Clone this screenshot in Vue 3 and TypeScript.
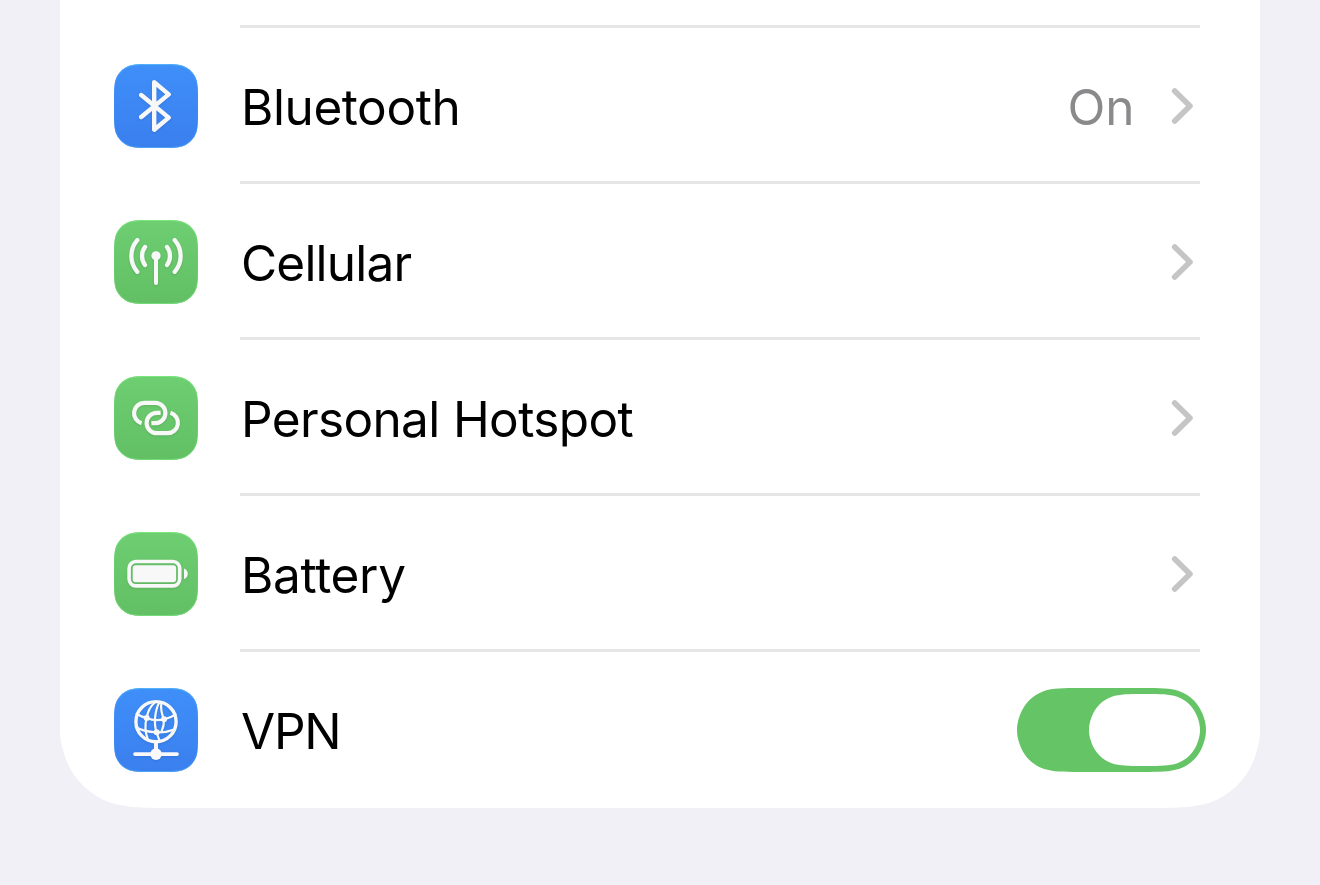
<script setup lang="ts">
import { ref } from 'vue'

type IconName = 'bluetooth' | 'cellular' | 'hotspot' | 'battery' | 'vpn'

interface SettingRow {
  icon: IconName
  label: string
  tint: 'blue' | 'green'
  value?: string
  toggle?: boolean
  tracking: number
}

const rows: SettingRow[] = [
  { icon: 'bluetooth', label: 'Bluetooth', tint: 'blue', value: 'On', tracking: -0.42 },
  { icon: 'cellular', label: 'Cellular', tint: 'green', tracking: -0.8 },
  { icon: 'hotspot', label: 'Personal Hotspot', tint: 'green', tracking: -0.63 },
  { icon: 'battery', label: 'Battery', tint: 'green', tracking: -0.33 },
  { icon: 'vpn', label: 'VPN', tint: 'blue', toggle: true, tracking: -1.2 },
]

const vpnOn = ref(true)

// Capsule whose round ends ease into the long sides.
function capsule(x: number, y: number, w: number, r: number): string {
  const L = (a: number, b: number) => `${(x + a * r).toFixed(2)} ${(y + b * r).toFixed(2)}`
  const R = (a: number, b: number) => `${(x + w - a * r).toFixed(2)} ${(y + b * r).toFixed(2)}`
  return [
    `M${L(1.5, 0)} L${R(1.5, 0)}`,
    `C${R(1.0885, 0)} ${R(0.8684, 0)} ${R(0.6315, 0.0749)}`,
    `C${R(0.3728, 0.1691)} ${R(0.1691, 0.3728)} ${R(0.0749, 0.6315)}`,
    `C${R(0.02, 0.78)} ${R(0, 0.88)} ${R(0, 1)}`,
    `C${R(0, 1.12)} ${R(0.02, 1.22)} ${R(0.0749, 1.3685)}`,
    `C${R(0.1691, 1.6272)} ${R(0.3728, 1.8309)} ${R(0.6315, 1.9251)}`,
    `C${R(0.8684, 2)} ${R(1.0885, 2)} ${R(1.5, 2)}`,
    `L${L(1.5, 2)}`,
    `C${L(1.0885, 2)} ${L(0.8684, 2)} ${L(0.6315, 1.9251)}`,
    `C${L(0.3728, 1.8309)} ${L(0.1691, 1.6272)} ${L(0.0749, 1.3685)}`,
    `C${L(0.02, 1.22)} ${L(0, 1.12)} ${L(0, 1)}`,
    `C${L(0, 0.88)} ${L(0.02, 0.78)} ${L(0.0749, 0.6315)}`,
    `C${L(0.1691, 0.3728)} ${L(0.3728, 0.1691)} ${L(0.6315, 0.0749)}`,
    `C${L(0.8684, 0)} ${L(1.0885, 0)} ${L(1.5, 0)}Z`,
  ].join(' ')
}

// Square with continuous corners.
function squircle(o: number, s: number, r: number): string {
  const f = (n: number) => n.toFixed(2)
  const p = [1.5287, 1.0885, 0.8684, 0.6315, 0.3728, 0.1691, 0.0749].map((n) => n * r)
  const [a, b, c, d, e, g, h] = p
  const e1 = o + s
  const q = (...n: number[]) => n.map(f).join(' ')
  return (
    `M${q(o + a, o)} L${q(e1 - a, o)}` +
    `C${q(e1 - b, o, e1 - c, o, e1 - d, o + h)}C${q(e1 - e, o + g, e1 - g, o + e, e1 - h, o + d)}C${q(e1, o + c, e1, o + b, e1, o + a)}` +
    `L${q(e1, e1 - a)}` +
    `C${q(e1, e1 - b, e1, e1 - c, e1 - h, e1 - d)}C${q(e1 - g, e1 - e, e1 - e, e1 - g, e1 - d, e1 - h)}C${q(e1 - c, e1, e1 - b, e1, e1 - a, e1)}` +
    `L${q(o + a, e1)}` +
    `C${q(o + b, e1, o + c, e1, o + d, e1 - h)}C${q(o + e, e1 - g, o + g, e1 - e, o + h, e1 - d)}C${q(o, e1 - c, o, e1 - b, o, e1 - a)}` +
    `L${q(o, o + a)}` +
    `C${q(o, o + b, o, o + c, o + h, o + d)}C${q(o + g, o + e, o + e, o + g, o + d, o + h)}C${q(o + c, o, o + b, o, o + a, o)}Z`
  )
}

const tilePath = squircle(0, 84, 24)
const tileEdge = squircle(0.5, 83, 23.6)
const trackPath = capsule(0, 0, 189, 42)
const knobPath = capsule(72, 6, 111, 36)
const knobOffPath = capsule(6, 6, 111, 36)
</script>

<template>
  <main class="screen">
    <svg class="defs" width="0" height="0" aria-hidden="true">
      <defs>
        <linearGradient id="fill-blue" x1="0" y1="0" x2="0" y2="1">
          <stop offset="0" stop-color="#3f8ff9" />
          <stop offset="1" stop-color="#3a7fee" />
        </linearGradient>
        <linearGradient id="fill-green" x1="0" y1="0" x2="0" y2="1">
          <stop offset="0" stop-color="#6ece72" />
          <stop offset="1" stop-color="#62bf64" />
        </linearGradient>
        <linearGradient id="edge-blue" x1="0" y1="0" x2="0" y2="1">
          <stop offset="0" stop-color="#52b4f8" />
          <stop offset="0.3" stop-color="#3f8ff9" stop-opacity="0.3" />
          <stop offset="0.7" stop-color="#3f8ff9" stop-opacity="0.3" />
          <stop offset="1" stop-color="#4ba4f2" />
        </linearGradient>
        <linearGradient id="edge-green" x1="0" y1="0" x2="0" y2="1">
          <stop offset="0" stop-color="#7be77d" />
          <stop offset="0.3" stop-color="#6fd672" stop-opacity="0.4" />
          <stop offset="0.7" stop-color="#6fd672" stop-opacity="0.4" />
          <stop offset="1" stop-color="#76dc79" />
        </linearGradient>
      </defs>
    </svg>

    <section class="card">
      <ul class="list">
        <li v-for="row in rows" :key="row.label" class="row">
          <svg class="tile" viewBox="0 0 84 84" aria-hidden="true">
            <path :d="tilePath" :fill="`url(#fill-${row.tint})`" />
            <path :d="tileEdge" fill="none" :stroke="`url(#edge-${row.tint})`" stroke-width="1" />
            <g v-if="row.icon === 'bluetooth'" class="line glyph" stroke-width="4.4">
              <path d="M27.2 31 L54.7 53.6 L40.2 65.7 V18.1 L54.7 30.4 L27.2 53" />
            </g>
            <g v-else-if="row.icon === 'cellular'" class="line glyph" stroke-width="4.3">
              <circle cx="42" cy="35.8" r="4.6" class="solid" />
              <path d="M42 38 V63" stroke-width="4" />
              <path d="M31 27 A15 15 0 0 0 31 45 M53 27 A15 15 0 0 1 53 45" />
              <path d="M23.3 20.2 A24 24 0 0 0 23.3 51.8 M60.7 20.2 A24 24 0 0 1 60.7 51.8" />
            </g>
            <g v-else-if="row.icon === 'hotspot'" class="line glyph butt" stroke-width="4.2">
              <path d="M27.6 47.2 A10.4 10.4 0 0 1 30.4 26.8 H41.2 A10.2 10.2 0 0 1 41.2 47.2 H37.4" />
              <path d="M56.4 36.8 A10.4 10.4 0 0 1 53.6 57.2 H42.8 A10.2 10.2 0 0 1 42.8 36.8 H46.6" />
            </g>
            <g v-else-if="row.icon === 'battery'" class="glyph">
              <rect x="15.1" y="29.5" width="50.6" height="24.4" rx="6.8" class="line" stroke-width="3.6" />
              <rect x="18.7" y="33.2" width="43.4" height="17" rx="3" class="solid" />
              <path d="M70 36.4 C75 38 75 45.6 70 47.2Z" class="solid" />
            </g>
            <g v-else class="line glyph" stroke-width="2.2">
              <circle cx="42" cy="33.7" r="20.1" stroke-width="3.4" />
              <path d="M41.5 14 C36.5 18 33.5 24 32.7 30 C30.5 37 31 44 34 52" />
              <path d="M45.5 14 C41 22 39.4 36 42.7 44.3 C43.4 47 44.4 50 45.6 52.6" />
              <path d="M47.4 14.4 C46.6 20 47.6 26 50 31.3 C50.2 36 49.2 40 47.4 44" />
              <path d="M22.6 26 C26 28 29 29.2 32.7 30 C38 32.3 44 32.6 50 31.3 C54 30.6 58 29 61.6 26.4" />
              <path d="M21.8 39 C27 42.5 35 44 42.7 44.3 C49 44.6 55 43.5 60.2 41.6" />
              <circle cx="32.7" cy="30" r="3" class="solid" />
              <circle cx="50" cy="31.3" r="3" class="solid" />
              <circle cx="42.7" cy="44.2" r="3" class="solid" />
              <path d="M42 54 V62" stroke-width="4" class="butt" />
              <path d="M21 66.1 H63" stroke-width="3.8" />
              <circle cx="42" cy="66.1" r="5.8" class="solid" />
            </g>
          </svg>

          <span class="label" :style="{ letterSpacing: `${row.tracking}px` }">{{ row.label }}</span>
          <span v-if="row.value" class="value">{{ row.value }}</span>

          <button
            v-if="row.toggle"
            class="switch"
            type="button"
            role="switch"
            :aria-checked="vpnOn"
            :aria-label="row.label"
            @click="vpnOn = !vpnOn"
          >
            <svg viewBox="0 0 189 84" width="189" height="84">
              <path :d="trackPath" :class="vpnOn ? 'track-on' : 'track-off'" />
              <path :d="vpnOn ? knobPath : knobOffPath" fill="#fff" />
            </svg>
          </button>
          <svg v-else class="chevron" viewBox="0 0 24 40" aria-hidden="true">
            <path d="M4.7 4.9 L20 20 L4.7 35.1" />
          </svg>
        </li>
      </ul>
    </section>
  </main>
</template>

<style>
html,
body {
  margin: 0;
  background: #f1f0f6;
}
</style>

<style scoped>
.screen {
  box-sizing: border-box;
  width: 1320px;
  height: 885px;
  padding: 0 60px;
  overflow: hidden;
  background: #f1f0f6;
  font-family: Inter, 'Liberation Sans', sans-serif;
}

.defs {
  position: absolute;
}

.card {
  box-sizing: border-box;
  height: 808px;
  padding-top: 25px;
  background: #fff;
  clip-path: path('M0 0 H1200 V730 C1200 739.4 1198.4 747.2 1194.2 758.8 C1186.8 778.9 1170.9 794.8 1150.7 802.2 C1132.3 808 1115.1 808 1081 808 H119 C84.9 808 67.7 808 49.3 802.2 C29.1 794.8 13.2 778.9 5.8 758.8 C1.6 747.2 0 739.4 0 730 Z');
}

.list {
  margin: 0;
  padding: 3px 0 0;
  list-style: none;
  background: linear-gradient(#e6e6e6, #e6e6e6) 180px 0 / 960px 3px no-repeat;
}

.row {
  display: flex;
  align-items: center;
  box-sizing: border-box;
  height: 156px;
  padding: 0 64px 0 54px;
}

.row:not(:last-child) {
  background: linear-gradient(#e6e6e6, #e6e6e6) 180px 100% / 960px 3px no-repeat;
}

.row:last-child {
  padding-right: 54px;
}

.tile {
  flex: none;
  width: 84px;
  height: 84px;
}

.glyph {
  filter: drop-shadow(0 1px 1px rgb(0 0 0 / 0.1));
}

.line {
  fill: none;
  stroke: #f8f8f9;
  stroke-linecap: round;
  stroke-linejoin: round;
}

.butt {
  stroke-linecap: butt;
}

.solid {
  fill: #f8f8f9;
  stroke: none;
}

.label {
  flex: 1;
  margin-left: 43px;
  padding-top: 2px;
  color: #000;
  font-size: 49.5px;
  line-height: 60px;
  white-space: nowrap;
}

.value {
  margin-right: 35.5px;
  padding-top: 2px;
  color: #8a8a8d;
  font-size: 49.5px;
  line-height: 60px;
}

.chevron {
  flex: none;
  width: 24px;
  height: 40px;
  margin-right: 2px;
}

.chevron path {
  fill: none;
  stroke: #c5c5c6;
  stroke-width: 5.6;
  stroke-linecap: round;
  stroke-linejoin: round;
}

.switch {
  display: block;
  flex: none;
  width: 189px;
  height: 84px;
  padding: 0;
  border: 0;
  background: none;
}

.switch svg {
  display: block;
}

.track-on {
  fill: #65c466;
}

.track-off {
  fill: #e9e9eb;
}
</style>
